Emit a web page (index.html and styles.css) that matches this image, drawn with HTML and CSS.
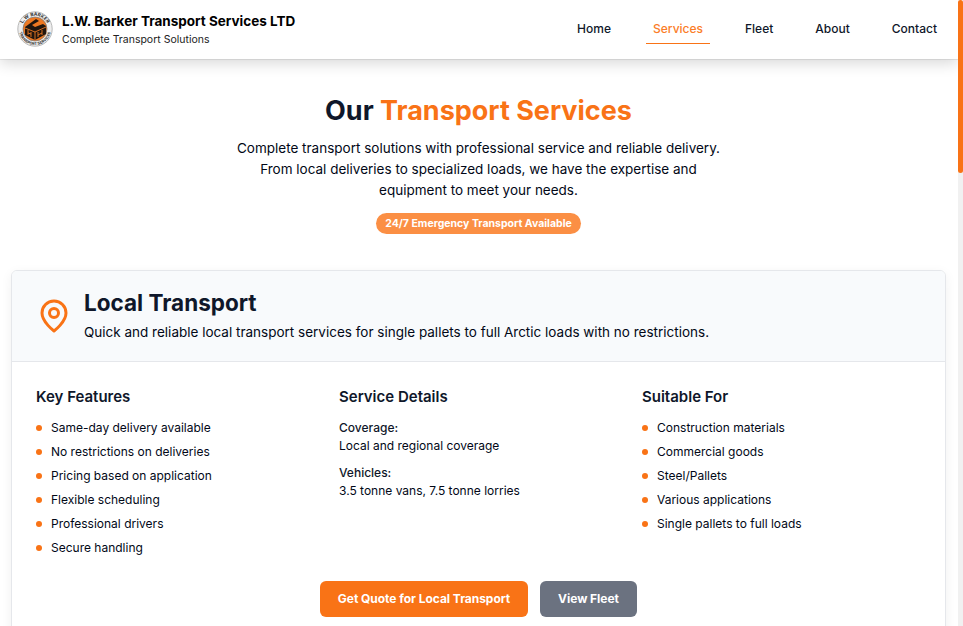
FILE: index.html
```html
<!DOCTYPE html>
<html lang="en">
<head>
<meta charset="utf-8">
<title>Our Transport Services</title>
<link rel="stylesheet" href="styles.css">
</head>
<body>
<div class="page">
  <header class="header">
    <div class="brand">
      <svg class="logo" viewBox="0 0 36 36">
        <defs><path id="top" d="M5 21A13.3 13.3 0 1 1 31 21"/><path id="bottom" d="M2.3 15A16 16 0 1 0 33.7 15"/></defs>
        <circle cx="18" cy="18" r="17.2" fill="#eee" stroke="#aaa" stroke-width=".8"/>
        <circle cx="18" cy="18" r="12" fill="#ed7822" stroke="#777" stroke-width=".7"/>
        <text class="logo-text"><textPath href="#top" startOffset="50%" text-anchor="middle">L.W BARKER</textPath></text>
        <text class="logo-text logo-small"><textPath href="#bottom" startOffset="50%" text-anchor="middle">TRANSPORT SERVICES</textPath></text>
        <path d="M8 16L19 8l3 2-7 4 3 2 8-3 3 2v8l-11 6-10-5z" fill="#20160f"/>
        <path d="M8 17l10 4 11-5M18 21v8M11 19v5M14 21v5M11 22l3 1M21 21v5M25 19v5M21 24l4-2" fill="none" stroke="#ed7822" stroke-width=".9"/>
      </svg>
      <div>
        <div class="brand-name">L.W. Barker Transport Services LTD</div>
        <div class="brand-tag">Complete Transport Solutions</div>
      </div>
    </div>
    <nav class="nav">
      <a>Home</a><a class="active">Services</a><a>Fleet</a><a>About</a><a>Contact</a>
    </nav>
  </header>
  <main>
    <section class="hero">
      <h1>Our <span>Transport Services</span></h1>
      <p>Complete transport solutions with professional service and reliable delivery.<br>From local deliveries to specialized loads, we have the expertise and<br>equipment to meet your needs.</p>
      <div class="badge">24/7 Emergency Transport Available</div>
    </section>
    <article class="card">
      <div class="card-head">
        <svg class="pin" viewBox="0 0 24 24" fill="none" stroke="#f97316" stroke-width="2" stroke-linecap="round" stroke-linejoin="round"><path d="M20 10c0 6-8 12-8 12s-8-6-8-12a8 8 0 0 1 16 0Z"/><circle cx="12" cy="10" r="3"/></svg>
        <div>
          <h2>Local Transport</h2>
          <p>Quick and reliable local transport services for single pallets to full Arctic loads with no restrictions.</p>
        </div>
      </div>
      <div class="columns">
        <div>
          <h3>Key Features</h3>
          <ul><li>Same-day delivery available</li><li>No restrictions on deliveries</li><li>Pricing based on application</li><li>Flexible scheduling</li><li>Professional drivers</li><li>Secure handling</li></ul>
        </div>
        <div>
          <h3>Service Details</h3>
          <dl><dt>Coverage:</dt><dd>Local and regional coverage</dd><dt>Vehicles:</dt><dd>3.5 tonne vans, 7.5 tonne lorries</dd></dl>
        </div>
        <div>
          <h3>Suitable For</h3>
          <ul><li>Construction materials</li><li>Commercial goods</li><li>Steel/Pallets</li><li>Various applications</li><li>Single pallets to full loads</li></ul>
        </div>
      </div>
      <div class="actions"><a class="button primary">Get Quote for Local Transport</a><a class="button secondary">View Fleet</a></div>
    </article>
  </main>
</div>
<div class="scroll-track"><div class="scroll-thumb"></div></div>
</body>
</html>
```
FILE: styles.css
```css
* { box-sizing: border-box; }
html, body { height: 100%; }
body { margin: 0; display: flex; overflow: hidden; background: #fff; color: #020817; font: 13.5px/21px Inter, "Liberation Sans", sans-serif; }
h1, h2, h3, p, ul, dl, dd { margin: 0; padding: 0; }
.page { width: 958px; height: 626px; overflow: hidden; }
.header { height: 59px; display: flex; align-items: center; justify-content: space-between; padding: 0 14px 1px 17px; box-shadow: 0 0 1px rgba(0,0,0,.45), 0 4px 14px rgba(0,0,0,.16); }
.brand { display: flex; align-items: center; gap: 9px; }
.logo { width: 36px; height: 36px; display: block; }
.logo-text { font: 700 4.8px Inter, sans-serif; fill: #333; }
.logo-small { font-size: 3.8px; }
.brand-name { margin-top: 3px; font-size: 13.5px; line-height: 18px; font-weight: 700; color: #000; }
.brand-tag { font-size: 10.5px; line-height: 19px; color: #222; }
.nav { display: flex; gap: 28px; color: #0f172a; font-size: 12px; font-weight: 500; }
.nav a { padding: 4px 7px; height: 30px; border-bottom: 1px solid transparent; }
.nav .active { color: #fb7d28; border-color: #f97316; }
.hero { width: 957px; text-align: center; padding-top: 34px; }
h1 { font-size: 27px; line-height: 35px; font-weight: 700; color: #0f172a; }
h1 span { color: #f97316; }
.hero p { margin-top: 10px; }
.badge { width: 205px; height: 21px; margin: 12px auto 0; border-radius: 11px; background: #fb8f44; color: #fff; font-size: 10.5px; font-weight: 700; }
.card { margin: 36px 12px 0 11px; height: 400px; border: 1px solid #e5e7eb; border-radius: 6px; box-shadow: 0 3px 12px rgba(0,0,0,.06); overflow: hidden; }
.card-head { display: flex; align-items: center; gap: 12px; height: 91px; padding: 0 24px; background: #f8fafc; border-bottom: 1px solid #e5e7eb; }
.pin { width: 36px; height: 36px; }
h2 { font-size: 22.5px; line-height: 26px; padding-bottom: 1px; font-weight: 700; color: #0f172a; }
.card-head p { margin-top: 5px; }
.columns { display: grid; grid-template-columns: repeat(3, 1fr); gap: 24px; padding: 24px 24px 0; height: 219px; }
h3 { font-size: 15px; line-height: 21px; font-weight: 600; color: #0f172a; margin-bottom: 12px; }
ul { list-style: none; display: grid; gap: 6px; }
li { display: flex; align-items: center; gap: 9px; font-size: 12px; line-height: 18px; }
li::before { content: ""; width: 6px; height: 6px; border-radius: 50%; background: #f97316; }
dl { font-size: 12px; line-height: 18px; }
dt { font-weight: 500; color: #0f172a; }
dd { margin-bottom: 9px; }
.actions { display: flex; justify-content: center; gap: 12px; }
.button { height: 36px; border-radius: 6px; font-size: 12px; line-height: 36px; font-weight: 700; letter-spacing: -.04px; color: #fff; text-align: center; }
.primary { width: 208px; background: #f97316; }
.secondary { width: 97px; background: #6b7280; }
.scroll-track { width: 5px; height: 626px; background: #f1f1f1; }
.scroll-thumb { height: 173px; background: #f97316; border-radius: 3px; }
```
